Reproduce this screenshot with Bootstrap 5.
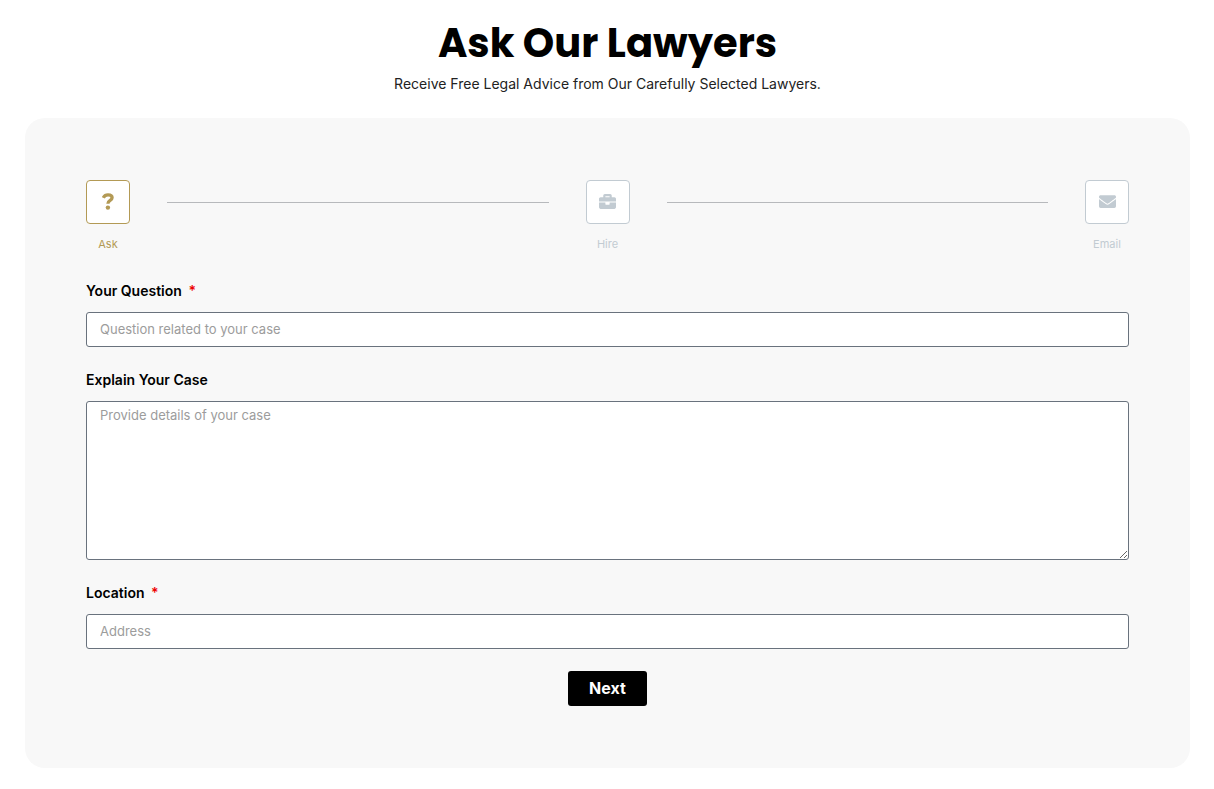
<!DOCTYPE html>
<html lang="en">
<head>
<meta charset="utf-8">
<meta name="viewport" content="width=device-width, initial-scale=1">
<title>Ask Our Lawyers</title>
<link href="https://cdn.jsdelivr.net/npm/bootstrap@5.3.0/dist/css/bootstrap.min.css" rel="stylesheet">
<style>
  body { font-family: Inter, "Liberation Sans", sans-serif; color: #000; font-size: 14px; }
  .page { padding: 20px 24px 20px 25px; }
  h1 { font-family: Poppins, Inter, sans-serif; font-size: 40px; font-weight: 700; line-height: 46px; margin-bottom: 6px; }
  .intro { color: #222; line-height: 24px; margin-bottom: 22px; }
  .panel { background: #f8f8f8; border-radius: 20px; padding: 62px 61px; }
  .steps { margin-bottom: 28px; }
  .step { width: 44px; color: #c2cbd2; font-size: 11px; line-height: 16px; }
  .step.active { color: #b39a55; }
  .step-icon { width: 44px; height: 44px; border: 1px solid currentColor; border-radius: 4px; background: #fff; margin-bottom: 12px; padding-bottom: 2px; }
  .step-line { height: 1px; background: #b7b9bc; margin: 22px 37px 0; }
  .form-label { font-size: 14px; font-weight: 600; line-height: 22px; margin-bottom: 10px; }
  .required { color: #e00; margin-left: 3px; }
  .form-control { font-size: 13px; line-height: 19px; border-color: #69727d; border-radius: 3px; padding: 7px 13px; color: #000; }
  .form-control::placeholder { color: #9c9c9c; }
  textarea.form-control { height: 159px; padding-top: 4px; }
  .field { margin-bottom: 22px; }
  .btn-next { background: #000; color: #fff; font-size: 16px; font-weight: 700; line-height: 35px; border: 0; border-radius: 3px; padding: 0 21px; }
  .btn-next:hover { background: #333; color: #fff; }
</style>
</head>
<body>
<main class="page">
  <header class="text-center">
    <h1>Ask Our Lawyers</h1>
    <p class="intro">Receive Free Legal Advice from Our Carefully Selected Lawyers.</p>
  </header>
  <form class="panel">
    <div class="steps d-flex align-items-start">
      <div class="step active d-flex flex-column align-items-center">
        <div class="step-icon d-flex align-items-center justify-content-center">
          <svg width="12" height="17" viewBox="0 0 12 17" fill="none" aria-hidden="true"><path d="M1.300 4.800C2.300 2.700 3.900 1.900 6 1.900c2.500 0 4.100 1.200 4.100 2.900 0 2.800-4.200 2.600-4.200 5.900" stroke="currentColor" stroke-width="3.300"/><circle cx="5.900" cy="14.600" r="2.200" fill="currentColor"/></svg>
        </div>
        <span>Ask</span>
      </div>
      <div class="step-line flex-fill"></div>
      <div class="step d-flex flex-column align-items-center">
        <div class="step-icon d-flex align-items-center justify-content-center">
          <svg width="17" height="17" viewBox="0 0 512 512" fill="currentColor" aria-hidden="true"><path d="M320 336c0 8.800-7.200 16-16 16h-96c-8.800 0-16-7.200-16-16v-48H0v144c0 25.600 22.400 48 48 48h416c25.600 0 48-22.400 48-48V288H320v48zm144-208h-80V80c0-25.600-22.400-48-48-48H176c-25.600 0-48 22.400-48 48v48H48c-25.600 0-48 22.400-48 48v80h512v-80c0-25.600-22.400-48-48-48zm-144 0H192V96h128v32z"/></svg>
        </div>
        <span>Hire</span>
      </div>
      <div class="step-line flex-fill"></div>
      <div class="step d-flex flex-column align-items-center">
        <div class="step-icon d-flex align-items-center justify-content-center">
          <svg width="17" height="17" viewBox="0 0 512 512" fill="currentColor" aria-hidden="true"><path d="M502.300 190.800c3.900-3.100 9.700-.2 9.700 4.700V400c0 26.500-21.500 48-48 48H48c-26.500 0-48-21.500-48-48V195.600c0-5 5.700-7.800 9.700-4.700 22.400 17.400 52.100 39.500 154.100 113.600 21.100 15.400 56.700 47.800 92.200 47.600 35.700.3 72-32.800 92.300-47.600 102-74.100 131.600-96.300 154-113.700zM256 320c23.200.4 56.600-29.200 73.400-41.400 132.700-96.300 142.800-104.700 173.400-128.700 5.800-4.500 9.200-11.500 9.200-18.900v-19c0-26.500-21.500-48-48-48H48c-26.500 0-48 21.500-48 48v19c0 7.400 3.400 14.300 9.200 18.900 30.600 23.900 40.700 32.400 173.400 128.700 16.800 12.200 50.200 41.800 73.400 41.400z"/></svg>
        </div>
        <span>Email</span>
      </div>
    </div>
    <div class="field">
      <label class="form-label d-block" for="question">Your Question <span class="required">*</span></label>
      <input class="form-control" id="question" type="text" placeholder="Question related to your case" required>
    </div>
    <div class="field">
      <label class="form-label d-block" for="details">Explain Your Case</label>
      <textarea class="form-control" id="details" placeholder="Provide details of your case"></textarea>
    </div>
    <div class="field">
      <label class="form-label d-block" for="address">Location <span class="required">*</span></label>
      <input class="form-control" id="address" type="text" placeholder="Address" required>
    </div>
    <div class="text-center">
      <button class="btn btn-next" type="button">Next</button>
    </div>
  </form>
</main>
<script src="https://cdn.jsdelivr.net/npm/bootstrap@5.3.0/dist/js/bootstrap.bundle.min.js"></script>
</body>
</html>
